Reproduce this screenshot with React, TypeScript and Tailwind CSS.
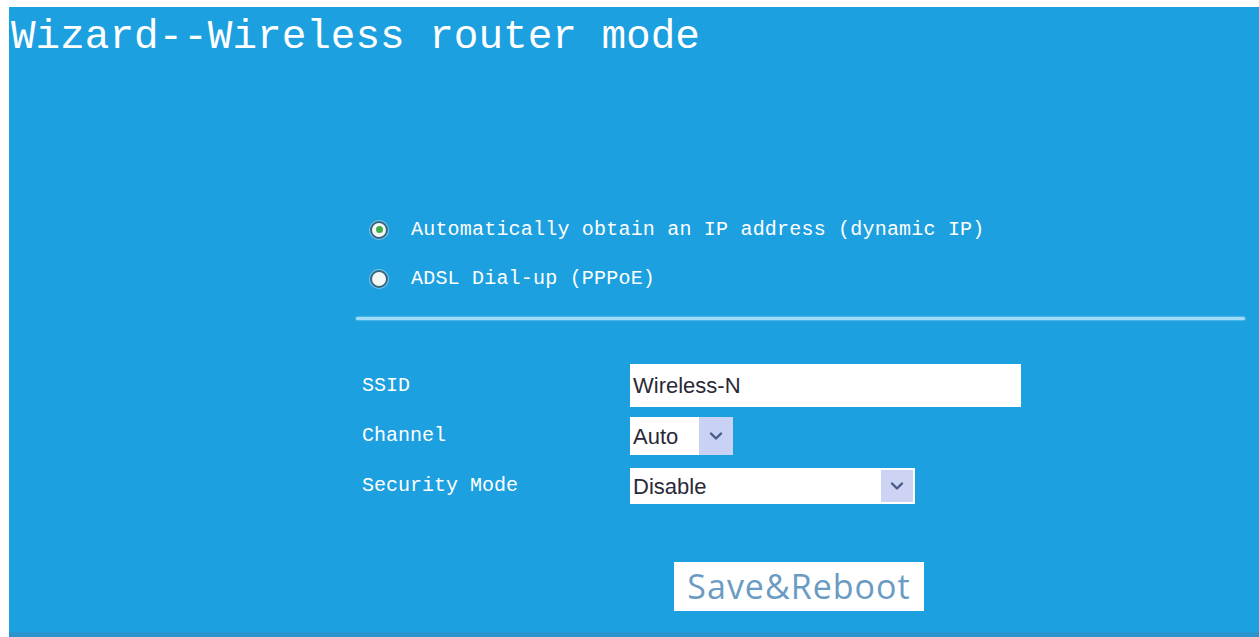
import React from 'react';

const mono = { fontFamily: '"Liberation Mono", "DejaVu Sans Mono", monospace' };
const sans = { fontFamily: '"Liberation Sans", Arial, sans-serif' };

function Chevron() {
  return (
    <svg width="14" height="10" viewBox="0 0 14 10" fill="none">
      <path d="M2 2.5 L7 7.5 L12 2.5" stroke="#4a5a86" strokeWidth="2.4" strokeLinecap="round" strokeLinejoin="round" />
    </svg>
  );
}

function Radio({ checked }: { checked: boolean }) {
  return (
    <span className="inline-flex items-center justify-center w-[18px] h-[18px] rounded-full bg-[#f4f8f4] border-2 border-[#35657f] shadow-[0_0_0_1px_rgba(255,255,255,0.4)]">
      {checked && <span className="w-[7px] h-[7px] rounded-full bg-[#3fae4a]" />}
    </span>
  );
}

export default function App() {
  return (
    <div className="w-[1259px] h-[637px] bg-white overflow-hidden pt-[7px] pl-[9px]">
      <div className="w-[1250px] h-[630px] bg-[#1ca0e0] border-b-[5px] border-[#2a94cc] flex flex-col">
        {/* Title */}
        <h1 className="text-white text-[41px] leading-[48px] mt-[6px] ml-[2px] font-normal" style={mono}>
          Wizard--Wireless router mode
        </h1>

        <div className="ml-[347px] w-[889px] flex flex-col mt-[144px]">
          {/* Connection type */}
          <div className="flex flex-col">
            <label className="flex items-center h-[49px] pl-[14px] gap-[23px] text-white text-[20px] tracking-[0.2px]" style={mono}>
              <Radio checked />
              <span>Automatically obtain an IP address (dynamic IP)</span>
            </label>
            <label className="flex items-center h-[49px] pl-[14px] gap-[23px] text-white text-[20px] tracking-[0.2px]" style={mono}>
              <Radio checked={false} />
              <span>ADSL Dial-up (PPPoE)</span>
            </label>
          </div>

          <div className="mt-[14px] h-[3px] bg-[#9fdcf8] rounded-full shadow-[0_0_2px_#bfe8fb]" />

          {/* Wireless settings */}
          <div className="flex flex-col mt-[44px]">
            <div className="flex items-center h-[43px]">
              <span className="w-[274px] pl-[6px] text-white text-[20px]" style={mono}>SSID</span>
              <div className="w-[391px] h-[43px] bg-white flex items-center pl-[3px] text-[22px] text-[#2b2838]" style={sans}>
                Wireless-N
              </div>
            </div>
            <div className="flex items-center h-[38px] mt-[10px]">
              <span className="w-[274px] pl-[6px] text-white text-[20px]" style={mono}>Channel</span>
              <div className="w-[103px] h-[38px] bg-white flex items-center text-[22px] text-[#2b2838]" style={sans}>
                <span className="flex-1 pl-[3px]">Auto</span>
                <span className="w-[34px] h-full bg-[#c9d1f4] flex items-center justify-center">
                  <Chevron />
                </span>
              </div>
            </div>
            <div className="flex items-center h-[36px] mt-[13px]">
              <span className="w-[274px] pl-[6px] text-white text-[20px]" style={mono}>Security Mode</span>
              <div className="w-[285px] h-[36px] bg-white flex items-center text-[22px] text-[#2b2838]" style={sans}>
                <span className="flex-1 pl-[3px]">Disable</span>
                <span className="w-[32px] h-[32px] mr-[2px] bg-[#ccd3f3] flex items-center justify-center">
                  <Chevron />
                </span>
              </div>
            </div>
          </div>

          <div className="mt-[58px] ml-[318px]">
            <button
              className="w-[250px] h-[49px] bg-white text-[#6b9bc3] text-[34px] tracking-[1px] flex items-center justify-center"
              style={{ fontFamily: '"Open Sans", "DejaVu Sans", sans-serif' }}
            >
              Save&amp;Reboot
            </button>
          </div>
        </div>
      </div>
    </div>
  );
}
